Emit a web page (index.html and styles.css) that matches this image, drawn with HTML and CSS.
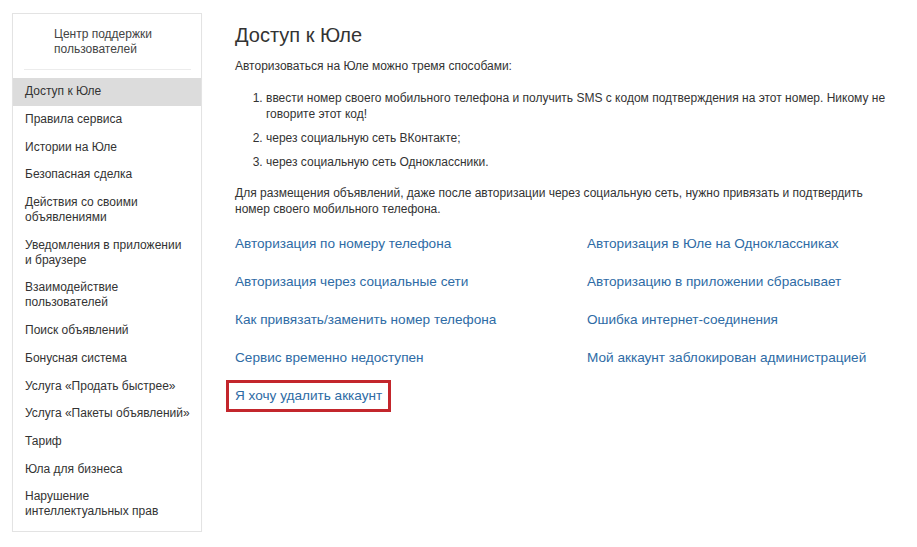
FILE: index.html
```html
<!DOCTYPE html>
<html lang="ru">
<head>
<meta charset="utf-8">
<title>Доступ к Юле</title>
<link rel="stylesheet" href="styles.css">
</head>
<body>
<div class="page">
  <aside class="sidebar">
    <div class="sidebar-head">Центр поддержки<br>пользователей</div>
    <nav class="menu">
      <a class="menu-item active">Доступ к Юле</a>
      <a class="menu-item">Правила сервиса</a>
      <a class="menu-item">Истории на Юле</a>
      <a class="menu-item">Безопасная сделка</a>
      <a class="menu-item">Действия со своими<br>объявлениями</a>
      <a class="menu-item">Уведомления в приложении<br>и браузере</a>
      <a class="menu-item">Взаимодействие<br>пользователей</a>
      <a class="menu-item">Поиск объявлений</a>
      <a class="menu-item">Бонусная система</a>
      <a class="menu-item">Услуга «Продать быстрее»</a>
      <a class="menu-item">Услуга «Пакеты объявлений»</a>
      <a class="menu-item">Тариф</a>
      <a class="menu-item">Юла для бизнеса</a>
      <a class="menu-item">Нарушение<br>интеллектуальных прав</a>
    </nav>
  </aside>
  <main class="content">
    <h1 class="title">Доступ к Юле</h1>
    <p class="text">Авторизоваться на Юле можно тремя способами:</p>
    <ol class="steps">
      <li>ввести номер своего мобильного телефона и получить SMS с кодом подтверждения на этот номер. Никому не говорите этот код!</li>
      <li>через социальную сеть ВКонтакте;</li>
      <li>через социальную сеть Одноклассники.</li>
    </ol>
    <p class="text">Для размещения объявлений, даже после авторизации через социальную сеть, нужно привязать и подтвердить номер своего мобильного телефона.</p>
    <div class="links">
      <a class="link">Авторизация по номеру телефона</a>
      <a class="link">Авторизация в Юле на Одноклассниках</a>
      <a class="link">Авторизация через социальные сети</a>
      <a class="link">Авторизацию в приложении сбрасывает</a>
      <a class="link">Как привязать/заменить номер телефона</a>
      <a class="link">Ошибка интернет-соединения</a>
      <a class="link">Сервис временно недоступен</a>
      <a class="link">Мой аккаунт заблокирован администрацией</a>
      <a class="link marked">Я хочу удалить аккаунт</a>
    </div>
  </main>
</div>
</body>
</html>
```
FILE: styles.css
```css
* { box-sizing: border-box; }
html, body {
  margin: 0;
  padding: 0;
  background: #fff;
}
body {
  font-family: "Liberation Sans", Arial, sans-serif;
  color: #333;
}
.page {
  display: flex;
  align-items: flex-start;
  gap: 33px;
  padding: 13px 0 0 12px;
}
.sidebar {
  width: 190px;
  flex: none;
  border: 1px solid #e3e3e3;
  box-shadow: 0 1px 1px rgba(0,0,0,0.04);
  background: #fff;
  padding-bottom: 5px;
}
.sidebar-head {
  font-size: 12px;
  line-height: 15px;
  padding: 13px 10px 12px 30px;
  margin: 0 10px 8px 11px;
  border-bottom: 1px solid #ececec;
  color: #444;
}
.menu {
  display: flex;
  flex-direction: column;
}
.menu-item {
  display: block;
  font-size: 12px;
  line-height: 15px;
  padding: 6.35px 8px 6.35px 12px;
  color: #333;
}
.menu-item.active {
  background: #dcdcdc;
}
.content {
  flex: 1;
  padding-right: 20px;
}
.title {
  font-size: 20px;
  font-weight: normal;
  line-height: 24px;
  margin: 10px 0 0;
  color: #333;
}
.text {
  font-size: 12px;
  line-height: 16px;
  margin: 11px 0 0;
}
.steps {
  font-size: 12px;
  line-height: 16px;
  margin: 16px 0 0;
  padding-left: 31px;
}
.steps li {
  margin-bottom: 8px;
}
.steps li:last-child { margin-bottom: 0; }
.steps + .text { margin-top: 15px; }
.links {
  display: grid;
  grid-template-columns: 352px 1fr;
  row-gap: 18px;
  margin-top: 17px;
  align-items: start;
}
.link {
  font-size: 13.6px;
  line-height: 20px;
  color: #2e6ba5;
  justify-self: start;
}
.link.marked {
  border: 3px solid #c3262c;
  padding: 3px 6px;
  margin: -6px 0 0 -9px;
}
```
